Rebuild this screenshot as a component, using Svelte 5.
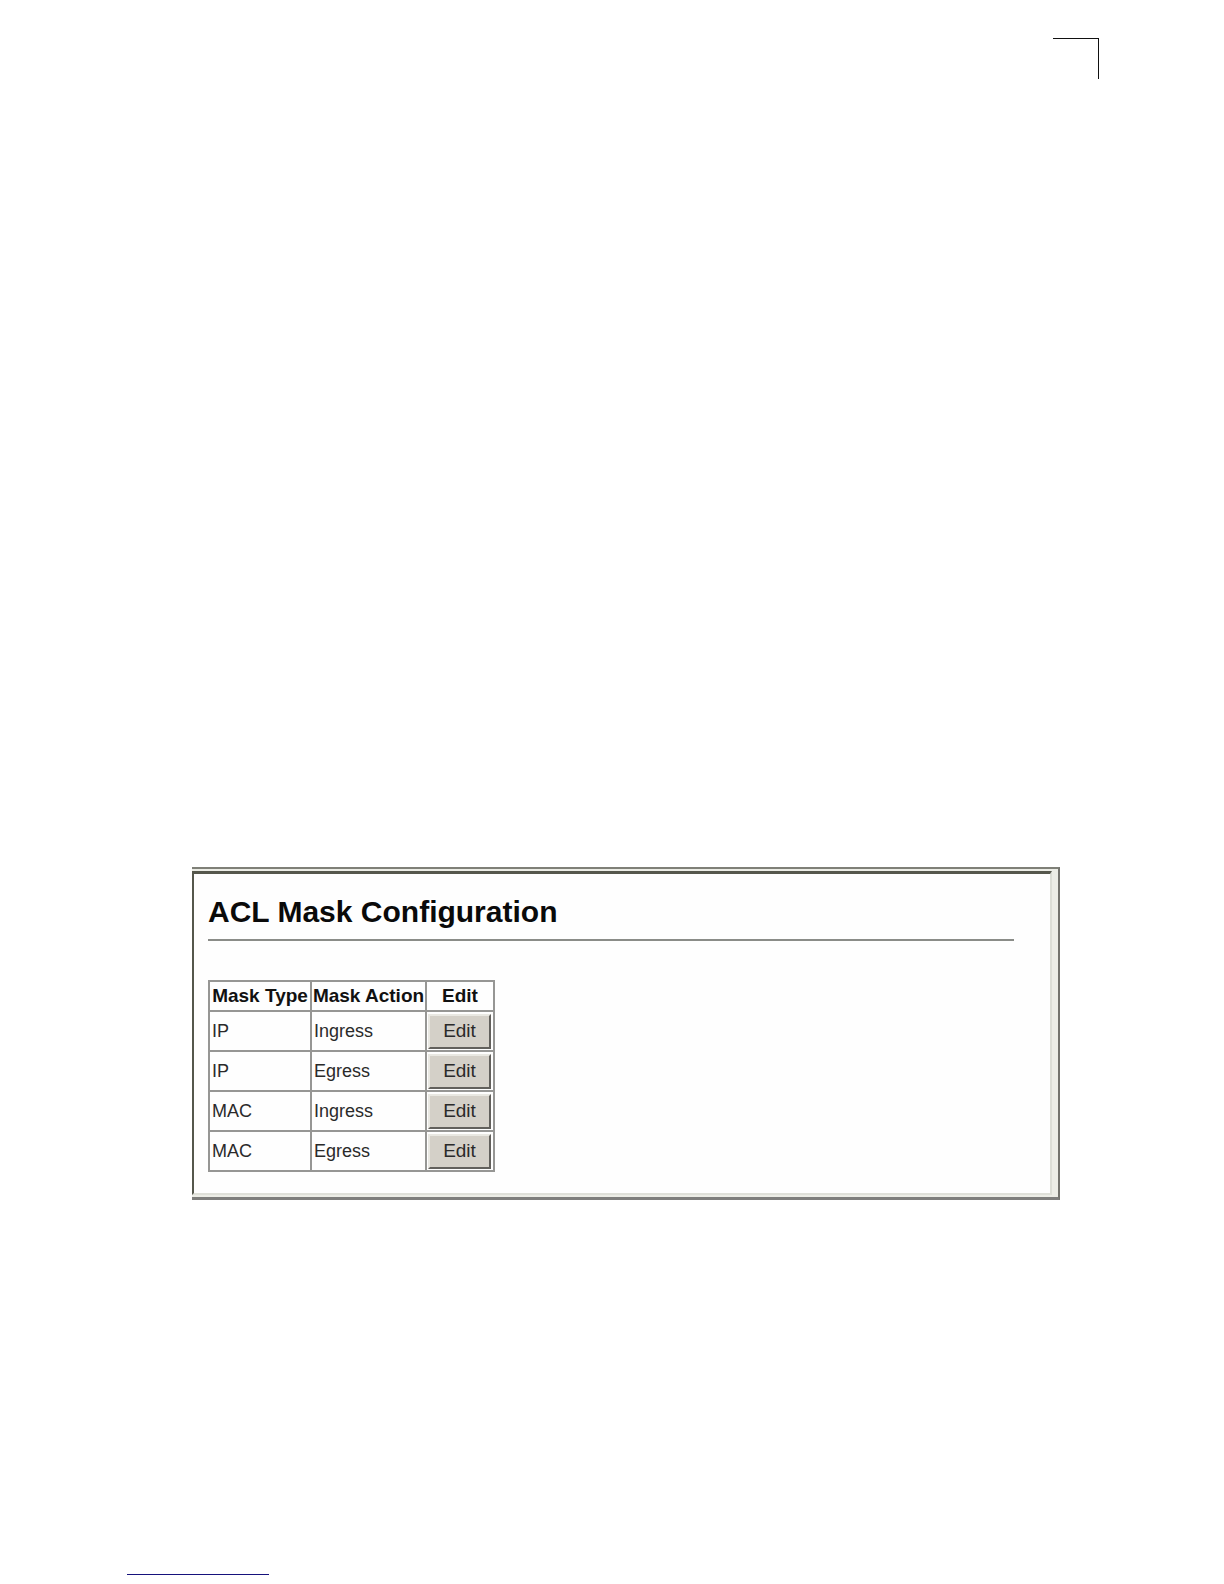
<script lang="ts">
  type MaskRow = { type: string; action: string };

  let rows: MaskRow[] = [
    { type: 'IP', action: 'Ingress' },
    { type: 'IP', action: 'Egress' },
    { type: 'MAC', action: 'Ingress' },
    { type: 'MAC', action: 'Egress' },
  ];
</script>

<div class="page">
  <div class="corner"></div>

  <main class="frame">
    <div class="panel">
      <h1>ACL Mask Configuration</h1>
      <hr />
      <table>
        <colgroup>
          <col class="type" />
          <col class="action" />
          <col class="edit" />
        </colgroup>
        <thead>
          <tr>
            <th scope="col">Mask Type</th>
            <th scope="col">Mask Action</th>
            <th scope="col">Edit</th>
          </tr>
        </thead>
        <tbody>
          {#each rows as row}
            <tr>
              <td>{row.type}</td>
              <td>{row.action}</td>
              <td class="control">
                <button type="button" aria-label="Edit {row.type} {row.action}">Edit</button>
              </td>
            </tr>
          {/each}
        </tbody>
      </table>
    </div>
  </main>

  <div class="footer-rule"></div>
</div>

<style>
  :global(body) {
    margin: 0;
    background: #fff;
  }

  .page {
    display: flex;
    flex-direction: column;
    box-sizing: border-box;
    min-height: 100vh;
    padding: 38px 125px 9px 127px;
    font-family: "Liberation Sans", Arial, sans-serif;
    color: #111;
  }

  .corner {
    align-self: flex-end;
    width: 45px;
    height: 40px;
    border-top: 1px solid #111;
    border-right: 1px solid #111;
  }

  .frame {
    margin: 788px 39px 0 65px;
    border-top: 2px solid #7f8078;
    border-right: 2px solid #74746e;
    border-bottom: 3px solid #7e7e7c;
    background: #ecede6;
    padding: 2px 6px 2px 0;
  }

  .panel {
    padding: 21px 36px 21px 14px;
    border-top: 3px solid #55574c;
    border-left: 2px solid #55574c;
    border-right: 2px solid #dcded6;
    border-bottom: 2px solid #dfe0d9;
    background: #fefefe;
  }

  h1 {
    margin: 0;
    font-size: 30px;
    line-height: 34px;
    color: #0a0a0a;
  }

  hr {
    height: 2px;
    margin: 10px 0 39px;
    border: 0;
    background: #8a8c88;
  }

  table {
    border-collapse: collapse;
    table-layout: fixed;
    width: 287px;
    font-size: 18px;
    line-height: 20px;
  }

  col.type {
    width: 102px;
  }

  col.action {
    width: 115px;
  }

  col.edit {
    width: 68px;
  }

  th,
  td {
    border: 2px solid #969694;
    padding: 0 2px;
    text-align: left;
    white-space: nowrap;
  }

  th {
    height: 28px;
    padding: 0;
    font-size: 19px;
    text-align: center;
  }

  td {
    height: 38px;
    color: #2a2a2a;
  }

  td.control {
    padding: 0 1px;
  }

  button {
    display: block;
    width: 63px;
    height: 35px;
    padding: 0;
    border: 2px solid;
    border-color: #e9e8e2 #62605c #62605c #e9e8e2;
    border-radius: 0;
    background: #d4d0c8;
    font: 19px/20px "Liberation Sans", Arial, sans-serif;
    color: #2a2a2a;
  }

  .footer-rule {
    width: 142px;
    margin-top: auto;
    border-top: 1px solid #16127c;
  }
</style>
